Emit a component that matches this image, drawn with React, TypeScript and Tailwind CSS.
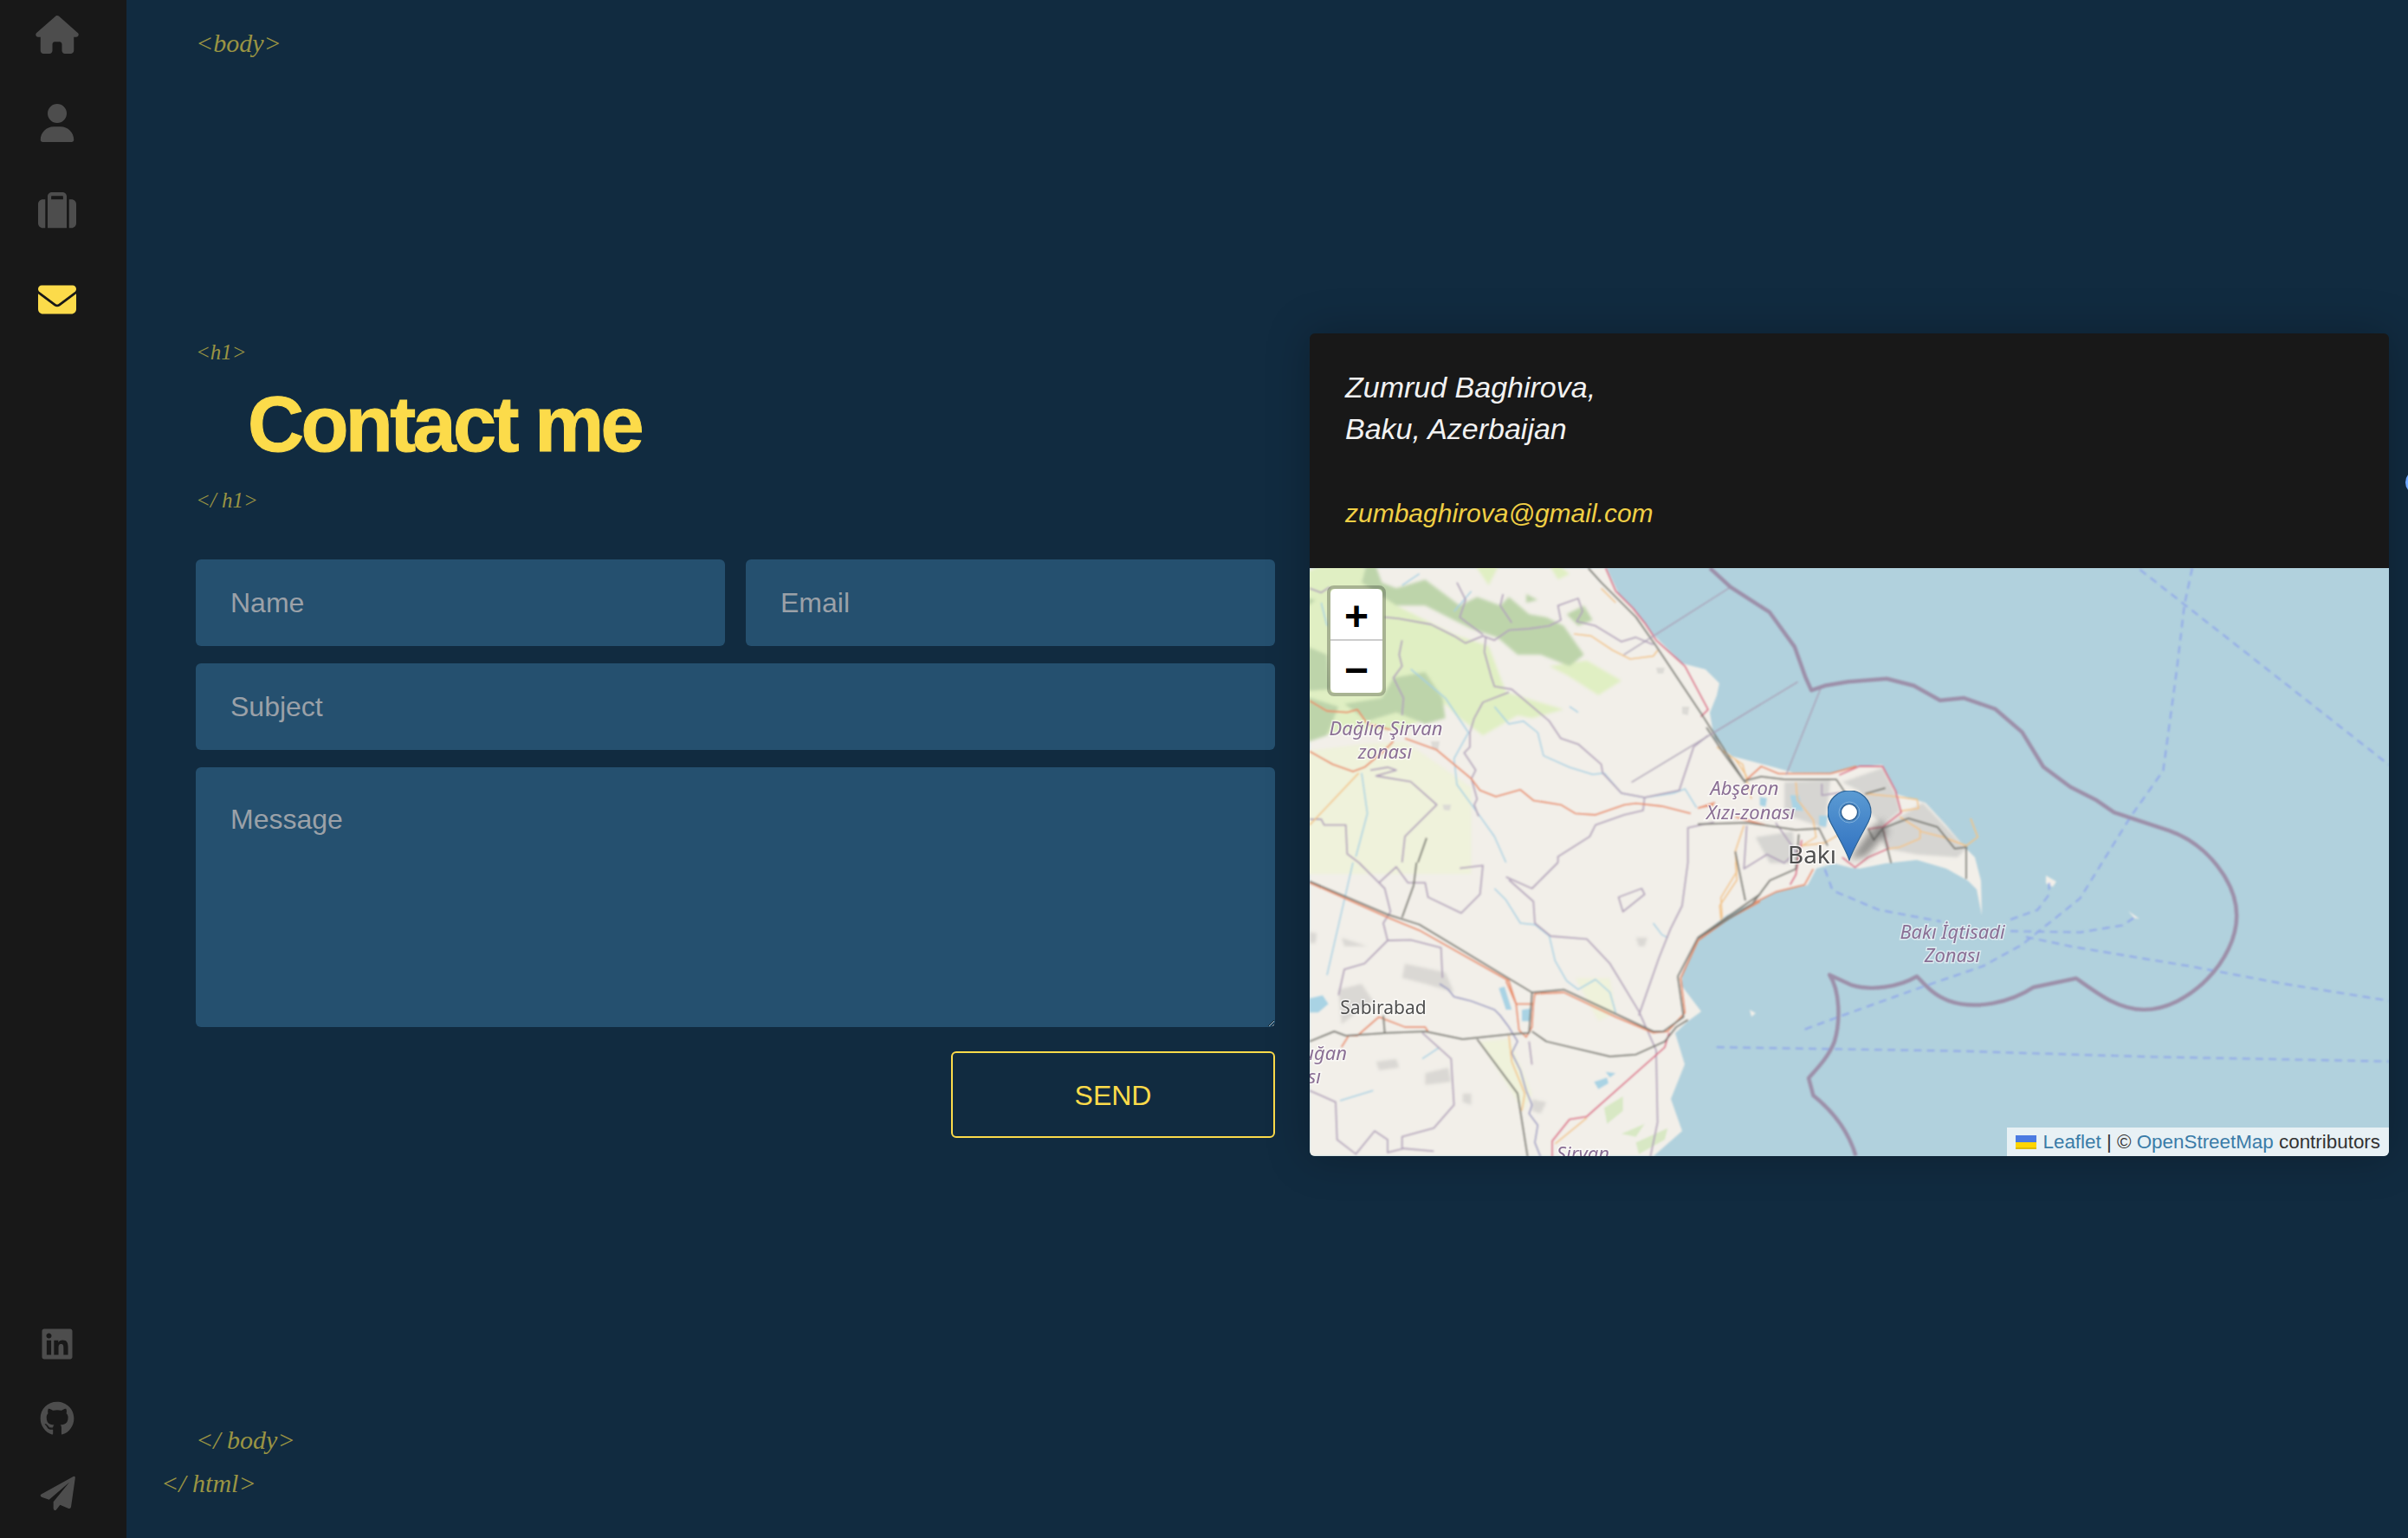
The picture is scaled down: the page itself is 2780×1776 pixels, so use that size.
import { FaEnvelope, FaGithub, FaHouse, FaLinkedin, FaSuitcase, FaUser } from 'react-icons/fa6'

const tagClass = "font-['Liberation_Serif',serif] italic text-[30px] leading-[40px] text-[#9a9443]"
const smallTagClass = "font-['Liberation_Serif',serif] italic text-[25px] leading-[40px] text-[#9a9443]"
const fieldClass =
  "w-full h-[100px] px-10 pt-px rounded-md bg-[#25506f] text-[32px] text-white font-['Liberation_Sans',sans-serif] placeholder:text-[#9ba1a8] outline-none"

function Sidebar() {
  return (
    <aside className="w-[146px] h-full shrink-0 bg-[#181818] flex flex-col justify-between items-center pr-[14px] pt-[18px] pb-[29px]">
      <nav className="flex flex-col items-center gap-[58px] text-[#4d4d4d]">
        <FaHouse className="w-[50px] h-[44px]" />
        <FaUser className="w-[44px] h-[44px]" />
        <FaSuitcase className="w-[44px] h-[44px]" />
        <FaEnvelope className="w-[44px] h-[44px] text-[#fcdb4a]" />
      </nav>
      <div className="flex flex-col items-center gap-[46px] text-[#4d4d4d]">
        <FaLinkedin className="w-[40px] h-[40px]" />
        <FaGithub className="w-[40px] h-[40px]" />
        <svg viewBox="130 665 135 135" className="w-[45px] h-[45px] -mt-[2px]" fill="currentColor">
          <path d="M252,674 Q260,670 258,682 L244,780 Q242,787 234,784 L206,772 L192,790 Q184,794 183,784 L183,762 L238,694 L168,754 L142,745 Q134,740 142,735 Z" />
        </svg>
      </div>
    </aside>
  )
}

function ContactForm() {
  return (
    <section className="w-[1246px] shrink-0 flex flex-col">
      <p className={`${smallTagClass} pt-[3px]`}>&lt;h1&gt;</p>
      <h1 className="mt-[13px] ml-[60px] text-[90px] leading-[100px] font-bold tracking-[-3.6px] text-[#fcdb4a] [-webkit-text-stroke:1px_#fcdb4a] font-['Liberation_Sans',sans-serif]">
        Contact me
      </h1>
      <p className={`${smallTagClass} mt-[18px]`}>&lt;/ h1&gt;</p>
      <form className="mt-[48px] flex flex-col gap-5">
        <div className="grid grid-cols-2 gap-6">
          <input className={fieldClass} placeholder="Name" />
          <input className={fieldClass} placeholder="Email" />
        </div>
        <input className={fieldClass} placeholder="Subject" />
        <textarea
          className="w-full h-[300px] block px-10 pt-[36px] rounded-md bg-[#25506f] text-[32px] text-white font-['Liberation_Sans',sans-serif] placeholder:text-[#9ba1a8] outline-none"
          placeholder="Message"
        />
        <button
          type="button"
          className="self-end mt-2 pt-px w-[374px] h-[100px] rounded-md border-2 border-[#fcdb4a] text-[32px] text-[#fcdb4a] font-['Liberation_Sans',sans-serif]"
        >
          SEND
        </button>
      </form>
    </section>
  )
}

function MapDrawing() {
  const admin = { fill: 'none', stroke: '#b3a3bb', strokeWidth: 5.5, strokeLinejoin: 'round' as const }
  const orange = { fill: 'none', stroke: '#e98c66', strokeWidth: 5.5, strokeLinejoin: 'round' as const }
  const yellow = { fill: 'none', stroke: '#f3c486', strokeWidth: 5, strokeLinejoin: 'round' as const }
  const grey = { fill: 'none', stroke: '#7c7c74', strokeWidth: 6, strokeLinejoin: 'round' as const }
  const pink = { fill: 'none', stroke: '#dd6a86', strokeWidth: 5.5, strokeLinejoin: 'round' as const }
  const river = { fill: 'none', stroke: '#a4d0e3', strokeWidth: 4.5, strokeLinejoin: 'round' as const }
  const label = {
    fontFamily: "'Noto Sans', sans-serif",
    fontStyle: 'italic',
    fill: '#8b6f95',
    stroke: '#ffffff',
    strokeOpacity: 0.55,
    strokeWidth: 3,
    paintOrder: 'stroke',
  }
  const city = {
    fontFamily: "'Noto Sans', sans-serif",
    fill: '#4f4f4f',
    stroke: '#ffffff',
    strokeOpacity: 0.6,
    strokeWidth: 3,
    paintOrder: 'stroke',
  }

  return (
    <svg viewBox="0 0 1246 679" className="w-full h-full block">
      <defs>
        <filter id="tile" x="-5%" y="-5%" width="110%" height="110%">
          <feGaussianBlur stdDeviation="0.8" />
        </filter>
        <filter id="label" x="-5%" y="-5%" width="110%" height="110%">
          <feGaussianBlur stdDeviation="0.5" />
        </filter>
        <filter id="soft" x="-10%" y="-10%" width="120%" height="120%">
          <feGaussianBlur stdDeviation="5" />
        </filter>
      </defs>
      <rect width="1246" height="679" fill="#b1d1dd" />
      <g filter="url(#tile)">
        {/* land */}
        <path
          fill="#f2efe9"
          d="M343,0 L357,30 L377,50 L393,73 L410,90 L430,110 L457,117 L473,133 L470,147 L462,167 L467,197 L487,217 L525,227 L558,236 L601,237 L635,229 L661,227 L678,261 L711,271 L735,297 L755,321 L768,334 L775,361 L776,401 L770,371 L760,361 L735,347 L701,337 L665,341 L635,347 L625,346 L605,341 L585,347 L575,366 L538,374 L511,387 L481,401 L448,427 L430,467 L430,483 L452,512 L437,523 L422,537 L433,573 L417,613 L430,650 L397,679 L0,679 L0,0 Z"
        />
        <path fill="#f2efe9" d="M850,355 L862,362 L858,368 L850,364 Z M945,396 L958,405 L952,404 Z M508,510 L515,514 L510,518 Z" />

        {/* north-west tiles */}
        <g transform="scale(0.3333)">
          <g filter="url(#soft)">
            <path fill="#eff2db" d="M-60,640 L180,610 L330,600 L560,760 L560,1060 L-60,1060 Z" />
            <path fill="#e0efc3" d="M-60,40 L140,-60 L300,130 L500,230 L620,270 L680,430 L880,490 L770,520 L720,510 L600,580 L520,520 L470,470 L330,560 L150,560 L-60,600 Z" />
            <path fill="#e0efc3" d="M830,340 L960,320 L1080,390 L1000,440 L890,370 Z M800,-60 L900,20 L860,40 Z M540,-60 L680,-60 L620,60 Z" />
            <path
              fill="#bdd4aa"
              d="M180,50 L210,-60 L250,50 L300,70 L400,40 L440,70 L520,130 L580,100 L660,130 L690,100 L760,160 L820,170 L880,200 L950,300 L900,340 L800,300 L720,300 L650,240 L560,210 L480,170 L400,130 L300,130 Z M-60,90 L20,110 L-60,180 Z M-60,250 L60,300 L70,420 L-60,430 Z M290,380 L400,360 L460,450 L470,520 L400,540 L300,500 L200,530 L120,470 L250,450 Z M-60,430 L100,480 L60,580 L-60,620 Z M890,160 L950,130 L980,180 L930,200 Z M750,90 L790,110 L750,120 Z"
            />
          </g>
          <path fill="#dcdad6" d="M1200,345 L1230,345 L1225,365 L1205,365 Z M1290,480 L1315,480 L1310,510 L1290,505 Z M420,600 L450,600 L445,630 L425,625 Z M460,820 L490,820 L485,840 L465,838 Z" />
          <g {...river}>
            <path d="M640,480 L690,540 L740,530 L790,570 L810,650 L900,690 L980,715 L1020,710 L1080,780 L1160,795 L1260,780 L1300,765 L1340,830" />
            <path d="M350,350 L470,450 L550,570 L500,660 L510,750 L590,860 L640,930 L680,1020" />
            <path d="M180,710 L200,850 L160,1000 M900,480 L930,500 M500,150 L560,80 M40,120 L60,200 M320,60 L380,20" />
          </g>
          <g {...admin}>
            <path d="M0,70 L40,85 L70,65" />
            <path d="M260,170 L310,175 L420,195 L500,235 L540,260 L600,235 L640,250 L690,215 L760,210 L830,200 L870,180 L860,130 L930,105 L945,150 L925,185 L990,200 L1080,255 L1130,240 L1190,265" />
            <path d="M610,240 L605,290 L630,380 L640,410 L700,420 L830,530 L870,590 L930,610 L1010,680 L1015,710 L1080,780 L1160,795 L1280,770 L1310,680 L1330,620 L1380,580" />
            <path d="M690,430 L600,465 L570,520 L555,570 L555,620 L535,640 L575,700 L560,730 L580,800 L570,820 L585,860" />
            <path d="M1160,795 L1155,840 L1090,855 L990,890 L970,930 L860,1000 L860,1020" />
            <path d="M320,250 L310,300 L320,340 L290,380 L325,450 L320,510 M210,700 L270,690 L300,700 L230,720 L350,740 L440,820 L330,930 L320,1020" />
            <path d="M0,870 L40,870 L50,890 L125,890 L130,990 L170,1020 M1310,1020 L1310,900 L1400,880 M670,90 L660,130 L700,190 M510,50 L540,110 L520,170 L600,230" />
          </g>
          <g {...yellow}>
            <path d="M915,228 L975,235 L1050,285 L1110,315 L1190,305 L1205,285 M170,710 L0,890 M1010,70 L1060,120 M1410,620 L1500,680 L1530,800" />
          </g>
          <g {...orange}>
            <path d="M0,460 L60,495 L130,500 L165,490 L200,540 L280,560" />
            <path d="M330,590 L440,630 L560,730 L590,770 L645,792 L730,768 L775,805 L870,820 L920,850 L990,855 L1090,820 L1130,815 L1220,825 L1320,850 M1350,830 L1400,820" />
            <path d="M0,635 L80,680 L150,705 L190,690 L250,640 L290,600" />
          </g>
          <path {...pink} d="M1025,0 L1060,80 L1120,140 L1160,190 L1200,250 L1300,340 L1380,490 L1355,515" />
          <path {...grey} d="M965,0 L1010,50 L1130,170 L1200,270 L1360,510 L1510,745" />
          <path {...grey} d="M405,935 L375,1020" />
        </g>

        {/* south-west tiles */}
        <g transform="translate(0,340) scale(0.3333)">
          <g filter="url(#soft)">
            <path fill="#eff2db" d="M590,620 L690,610 L770,800 L740,860 Z M920,400 L1040,400 L1060,520 L1000,550 Z" />
            <path fill="#dad8d4" d="M100,440 L180,420 L220,480 L110,560 Z M330,350 L470,380 L500,450 L400,420 L320,400 Z M400,730 L480,710 L490,760 L400,770 Z M230,690 L300,680 L310,710 L240,720 Z M530,800 L560,800 L560,840 L530,830 Z M770,820 L820,830 L800,870 L770,860 Z M0,240 L25,245 L20,280 L0,280 Z M110,260 L200,290 L120,290 Z M1130,260 L1170,260 L1160,290 L1140,290 Z" />
          </g>
          <path fill="#d8e8c4" d="M1020,850 L1085,810 L1085,860 L1030,905 Z M1080,940 L1160,905 L1130,950 Z M1130,970 L1240,920 L1230,960 L1140,1010 Z" />
          <path fill="#a9d3e4" d="M0,470 L45,460 L65,490 L30,520 L0,520 Z M735,510 L770,505 L765,550 L735,550 Z M655,435 L675,430 L700,510 L680,510 Z M985,760 L1030,745 L1035,765 L1000,785 Z M1025,725 L1060,730 L1040,745 Z" />
          <g {...river}>
            <path d="M640,90 L680,130 L730,210 L780,215 L830,255 L850,340 L890,410 L930,440 L990,405 L1040,450 L1060,520" />
            <path d="M150,0 L60,390 M1190,210 L1220,250 L1240,260 M105,825 L220,790 M390,680 L450,640" />
          </g>
          <g {...admin}>
            <path d="M170,0 L260,90 L280,170 L255,210 L270,270 L190,350 L120,370 L100,460" />
            <path d="M240,70 L300,15 L340,70 L400,70 L410,120 L525,175 L590,110 L600,10 L520,20" />
            <path d="M270,270 L350,268 L455,295 L460,400 M680,50 L770,90 L860,0" />
            <path d="M690,60 L775,135 L780,210 L835,255 L960,265 L1040,350 L1140,515 L1200,650 L1205,900 L1180,1020" />
            <path d="M1310,0 L1290,150 L1250,230 L1210,330 L1140,530 M1070,120 L1150,90 L1160,110 L1085,170 Z" />
            <path d="M390,590 L490,680 L500,840 L430,920 L320,950 L320,990 L430,1000 M0,790 L90,830 L95,960 L160,1010 L225,930 L270,960 L270,1005 L330,990 M760,620 L770,700" />
          </g>
          <path
            fill="none"
            stroke="#9b9ac2"
            strokeWidth="5"
            d="M450,420 L480,440 L500,465 L520,470 L560,480 L640,510 L660,530 L690,570 L720,620 L700,660 L730,720 L750,790 L770,840 L760,870 L790,910 L780,970 L800,1020"
          />
          <g {...yellow}>
            <path d="M690,600 L700,690 L745,800 L735,860 M1475,0 L1480,60 L1420,150 L1425,200 M850,975 L960,885" />
          </g>
          <g {...orange}>
            <path d="M0,70 L270,190 L380,235 L690,410 L715,490 L775,490 L780,455 L880,450 L1060,535 L1190,590 L1240,585 L1300,520 L1285,400 L1345,270 L1450,195 L1560,135" />
            <path d="M110,640 L135,600 L165,600 L240,535 L330,570 L400,570 L410,585 M680,410 L715,490 L725,580 L750,605 L770,570 L775,490" />
          </g>
          <path {...pink} d="M840,1020 L840,965 L900,890 L960,880 L1230,640 L1245,590" />
          <g {...grey}>
            <path d="M0,65 L270,180 L380,215 L770,450 L880,440 L1190,585 L1225,585 L1295,535 L1275,395 L1345,260 L1560,110" />
            <path d="M0,620 L85,585 L125,600 L270,590 L400,585 L530,612 L695,595 L760,590 L770,450" />
            <path d="M770,585 L820,620 L1040,672 L1130,665 L1230,620 L1270,570 L1310,545" />
            <path d="M580,612 L720,800 L755,1020 M255,530 L260,590 M370,0 L360,80 L320,190" />
          </g>
        </g>

        {/* Absheron */}
        <g transform="translate(448,184) scale(0.3333)">
          <path filter="url(#soft)" fill="#d6d5d2" d="M500,190 L640,140 L690,240 L700,290 L640,340 L600,300 L560,220 Z M620,360 L780,260 L860,345 L930,420 L900,450 L760,440 L650,420 Z M200,380 L330,360 L340,470 L250,470 Z M300,190 L460,180 L440,350 L300,300 Z" />
          <path fill="#a9d3e4" d="M320,235 L350,235 L365,290 L330,285 Z M420,305 L450,305 L445,345 L420,340 Z M215,240 L240,245 L235,275 L215,270 Z" />
          <g {...yellow}>
            <path d="M130,110 L170,170 M340,190 L345,250 L400,320 L410,380 L360,410 L440,400 L500,365" />
            <path d="M580,230 L690,240 L760,250 L765,280 L700,290 M700,310 L770,355 L770,385 L700,415 L660,420" />
            <path d="M770,360 L850,380 L930,410 L970,380 L945,315 M160,340 L130,430 L135,500 L80,590 L85,660" />
          </g>
          <g {...admin}>
            <path d="M170,340 L160,490 L240,440 L300,470 L340,430 L270,330 M430,195 L430,235 L500,225" />
          </g>
          <g {...orange}>
            <path d="M0,280 L60,260 M170,180 L220,135 L280,160 L460,160 L550,135 M190,610 L270,570 L370,545 L400,490 M130,310 L240,340" />
          </g>
          <g {...pink}>
            <path d="M590,352 L640,345 L705,295 L685,220 L640,135 L560,135 L490,165" />
            <path d="M640,345 L660,420 L590,450 L545,485 L500,450 M360,390 L340,510 L320,545" />
          </g>
          <g {...grey}>
            <path d="M30,0 L90,90 L160,185 L220,170 L300,180 L480,180 L510,225" />
            <path d="M0,335 L170,330 L340,355 L420,350 L450,410" />
            <path d="M590,350 L610,390 L640,350 L730,315 L830,345 L890,420 L930,415 L930,525" />
            <path d="M640,350 L670,470 M580,230 L650,210 M350,370 L340,490 L250,530 L190,610 L0,730 M130,430 L165,600" />
          </g>
        </g>

        {/* sea lines */}
        <g transform="translate(568,-16) scale(0.4464)" fill="none">
          <g stroke="#a99db4" strokeWidth="3">
            <path d="M-184,85 L-460,260 M-10,330 L-440,590 M50,345 L-40,570" />
          </g>
          <g stroke="#93abe8" strokeWidth="5" strokeDasharray="20 14">
            <path d="M875,40 L990,130 L1519,545" />
            <path d="M1010,36 L990,130 L970,300 L935,560 L850,680 L720,890 L620,970 L570,1010 L470,1065 L310,1120 L100,1195 L0,1232" />
            <path d="M60,815 L80,870 L200,920 L360,950 M540,945 L610,920 L640,880 L640,850" />
            <path d="M540,975 L720,978 L830,960 L860,940" />
            <path d="M580,990 L700,1015 L1000,1065 L1240,1110 L1519,1155" />
            <path d="M-220,1275 L400,1285 L900,1300 L1519,1312" />
          </g>
          <path
            stroke="#9c8fa9"
            strokeWidth="10"
            strokeLinejoin="round"
            d="M-237,36 L-184,85 L-83,150 L-18,240 L9,316 L25,352 L60,340 L120,330 L220,322 L290,340 L358,378 L420,372 L500,400 L570,460 L625,550 L695,602 L760,635 L808,668 L950,715 C1050,750 1125,850 1125,935 C1125,1050 1000,1178 885,1178 C820,1178 770,1140 710,1097 L600,1120 C540,1160 450,1180 380,1155 C340,1140 320,1115 298,1092 C250,1120 180,1130 130,1115 L72,1088 C100,1130 100,1210 85,1260 C70,1300 40,1330 18,1355 L30,1400 C80,1440 120,1490 140,1556"
          />
        </g>
      </g>

      {/* labels */}
      <g filter="url(#label)">
        <text {...label} x="88" y="193" fontSize="22" textAnchor="middle">Dağlıq Şirvan</text>
        <text {...label} x="87" y="220" fontSize="22" textAnchor="middle">zonası</text>
        <text {...label} x="502" y="262" fontSize="22" textAnchor="middle">Abşeron</text>
        <text {...label} x="509" y="290" fontSize="22" textAnchor="middle">Xızı-zonası</text>
        <text {...label} x="742" y="428" fontSize="22" textAnchor="middle">Bakı İqtisadi</text>
        <text {...label} x="742" y="455" fontSize="22" textAnchor="middle">Zonası</text>
        <text {...label} x="43" y="568" fontSize="22" textAnchor="end">Muğan</text>
        <text {...label} x="13" y="595" fontSize="22" textAnchor="end">zonası</text>
        <text {...label} x="285" y="684" fontSize="22">Şirvan</text>
        <text {...city} x="85" y="515" fontSize="21" textAnchor="middle">Sabirabad</text>
        <text {...city} x="580" y="341" fontSize="28" textAnchor="middle">Bakı</text>
      </g>
    </svg>
  )
}

function Marker() {
  return (
    <svg viewBox="0 0 100 90" className="absolute left-[598px] top-[257px] w-[100px] h-[90px]">
      <defs>
        <linearGradient id="pin" x1="0" y1="0" x2="0" y2="1">
          <stop offset="0" stopColor="#5b9bd3" />
          <stop offset="1" stopColor="#2f70c0" />
        </linearGradient>
        <filter id="pinShadow" x="-30%" y="-30%" width="160%" height="160%">
          <feGaussianBlur stdDeviation="4" />
        </filter>
      </defs>
      <path d="M25,80 L50,44 L62,34 L70,48 L44,76 Z" fill="#555" opacity="0.6" filter="url(#pinShadow)" />
      <path
        d="M25,80 C20,66 8,46 3,36 C1,32 0,29 0,25 C0,11 11,0 25,0 C39,0 50,11 50,25 C50,29 49,32 47,36 C42,46 30,66 25,80 Z"
        fill="url(#pin)"
        stroke="#2c6295"
        strokeWidth="1.2"
      />
      <circle cx="25" cy="25" r="12" fill="#4c8ac6" stroke="#7fb0dc" strokeWidth="1" />
      <circle cx="25" cy="25" r="9.5" fill="#ffffff" stroke="#2a5a8c" strokeWidth="1.2" />
    </svg>
  )
}

function ContactCard() {
  return (
    <section className="mt-px w-[1246px] shrink-0 rounded-md overflow-hidden bg-[#181818] shadow-[0_0_50px_rgba(0,0,0,0.25)]">
      <div className="h-[271px] pt-[38px] pl-[41px] italic font-light text-[34px] leading-[48px] text-[#f2f2f2] font-['Liberation_Sans',sans-serif]">
        <p>Zumrud Baghirova,</p>
        <p>Baku, Azerbaijan</p>
        <p className="mt-[50px] text-[#f0cf45] text-[30px]">zumbaghirova@gmail.com</p>
      </div>
      <div className="relative h-[679px]">
        <MapDrawing />
        <div className="absolute left-5 top-5 w-[68px] rounded-lg border-4 border-black/25 overflow-hidden">
          <div className="h-[60px] pt-[5px] bg-white border-b-2 border-[#cccccc] rounded-t-md flex items-center justify-center text-[48px] font-bold leading-none text-black font-['Liberation_Sans',sans-serif]">
            +
          </div>
          <div className="h-[60px] pt-[7px] bg-white rounded-b-md flex items-center justify-center text-[48px] font-bold leading-none text-black font-['Liberation_Sans',sans-serif]">
            −
          </div>
        </div>
        <Marker />
        <div className="absolute right-0 bottom-0 h-[33px] pl-[10px] pr-[10px] flex items-center gap-[7px] bg-white/70 text-[22.4px] whitespace-pre text-[#333333] font-['Liberation_Sans',sans-serif]">
          <svg viewBox="0 0 12 8" className="w-6 h-4">
            <path fill="#4C7BE1" d="M0 0h12v4H0z" />
            <path fill="#FFD500" d="M0 4h12v3H0z" />
            <path fill="#E0BC00" d="M0 7h12v1H0z" />
          </svg>
          <span>
            <span className="text-[#3a7ca8]">Leaflet</span> | © <span className="text-[#3a7ca8]">OpenStreetMap</span> contributors
          </span>
        </div>
      </div>
    </section>
  )
}

export default function App() {
  return (
    <div className="relative flex w-[2780px] h-[1776px] overflow-hidden bg-[#112b40]">
      <Sidebar />
      <main className="flex-1 flex flex-col pl-20 pt-[30px] pb-[43px]">
        <p className={tagClass}>&lt;body&gt;</p>
        <div className="mt-[314px] flex items-start gap-10">
          <ContactForm />
          <ContactCard />
        </div>
        <p className={`${tagClass} mt-auto`}>&lt;/ body&gt;</p>
        <p className={`${tagClass} mt-[10px] -ml-10`}>&lt;/ html&gt;</p>
      </main>
      <div className="absolute left-[2777px] top-[543px] w-[28px] h-[28px] rounded-full bg-[#6ea8ff]" />
    </div>
  )
}
